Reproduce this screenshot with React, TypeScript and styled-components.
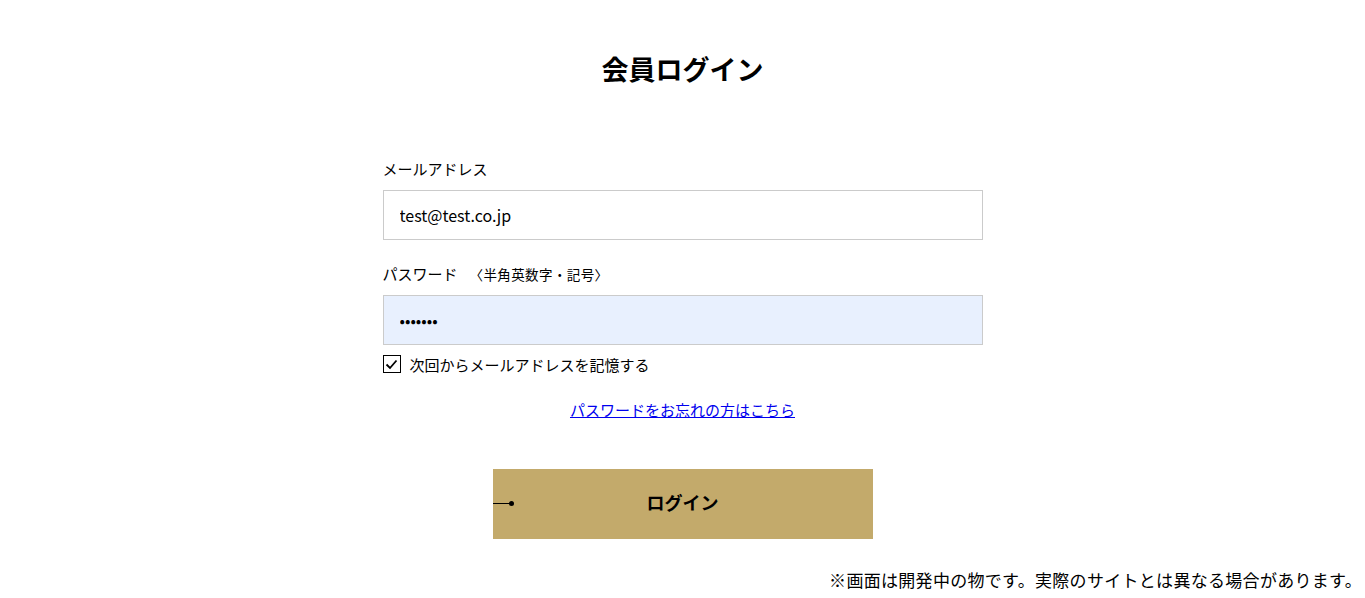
import React from "react";
import styled, { createGlobalStyle } from "styled-components";

const GlobalStyle = createGlobalStyle`
  body {
    margin: 0;
    background: #fff;
    color: #000;
    font-family: "Noto Sans CJK JP", "Noto Sans", sans-serif;
  }
`;

const Page = styled.div`
  width: 100%;
  padding-top: 49px;
`;

const Title = styled.h1`
  margin: 0;
  font-size: 27px;
  line-height: 40px;
  font-weight: 700;
  text-align: center;
`;

const Form = styled.form`
  width: 600px;
  margin: 69px auto 0;
  display: flex;
  flex-direction: column;
`;

const Label = styled.label<{ $top?: number }>`
  display: block;
  margin-top: ${(p) => p.$top ?? 0}px;
  margin-bottom: 10px;
  font-size: 15px;
  line-height: 22px;
`;

const Note = styled.span`
  margin-left: 12px;
  font-size: 13.5px;
  letter-spacing: 0.4px;
`;

const Input = styled.input<{ $filled?: boolean }>`
  box-sizing: border-box;
  width: 100%;
  height: 50px;
  padding: 0 16px;
  border: 1px solid #cbcbcb;
  border-radius: 0;
  outline: none;
  background: ${(p) => (p.$filled ? "#e8f0fe" : "#fff")};
  font-family: "Noto Sans CJK JP", "Noto Sans", sans-serif;
  font-size: 16px;
  color: #000;
`;

const CheckRow = styled.label`
  display: flex;
  align-items: center;
  gap: 9px;
  margin-top: 9px;
  height: 20px;
  font-size: 15px;
  cursor: pointer;
`;

const Box = styled.span`
  box-sizing: border-box;
  width: 18px;
  height: 18px;
  border: 1.5px solid #000;
  display: flex;
  align-items: center;
  justify-content: center;
  background: #fff;
`;

const ForgotLink = styled.a`
  align-self: center;
  margin-top: 25px;
  font-size: 15px;
  line-height: 22px;
  color: #0000ee;
  text-decoration: underline;
`;

const Submit = styled.button`
  position: relative;
  align-self: center;
  margin-top: 48px;
  width: 380px;
  height: 70px;
  padding: 0 0 4px;
  border: none;
  background: #c3aa6b;
  font-family: "Noto Sans CJK JP", "Noto Sans", sans-serif;
  font-size: 18px;
  font-weight: 700;
  color: #000;
  cursor: pointer;

  &::before {
    content: "";
    position: absolute;
    left: 0;
    top: 34px;
    width: 18px;
    height: 1px;
    background: #000;
  }

  &::after {
    content: "";
    position: absolute;
    left: 16px;
    top: 32px;
    width: 5px;
    height: 5px;
    border-radius: 50%;
    background: #000;
  }
`;

const Footer = styled.p`
  margin: 29px 0 0;
  padding-right: 3px;
  text-align: right;
  font-size: 17px;
  line-height: 24px;
  letter-spacing: 0.3px;
`;

const App: React.FC = () => {
  return (
    <Page>
      <GlobalStyle />
      <Title>会員ログイン</Title>
      <Form onSubmit={(e) => e.preventDefault()}>
        <Label htmlFor="email">メールアドレス</Label>
        <Input id="email" type="text" defaultValue="test@test.co.jp" />
        <Label htmlFor="password" $top={23}>
          パスワード<Note>〈半角英数字・記号〉</Note>
        </Label>
        <Input id="password" type="password" defaultValue="1234567" $filled />
        <CheckRow>
          <Box>
            <svg width="13" height="11" viewBox="0 0 13 11">
              <path d="M1.5 5.5 L5 9 L11.5 1.5" fill="none" stroke="#000" strokeWidth="1.8" />
            </svg>
          </Box>
          次回からメールアドレスを記憶する
        </CheckRow>
        <ForgotLink href="#">パスワードをお忘れの方はこちら</ForgotLink>
        <Submit type="submit">ログイン</Submit>
      </Form>
      <Footer>※画面は開発中の物です。実際のサイトとは異なる場合があります。</Footer>
    </Page>
  );
};

export default App;
